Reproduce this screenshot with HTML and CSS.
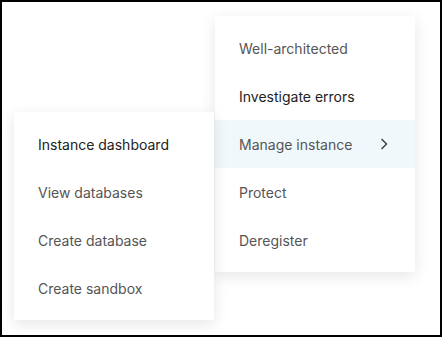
FILE: index.html
```html
<!DOCTYPE html>
<html lang="en">
<head>
    <meta charset="UTF-8">
    <title>Instance menu</title>
    <link rel="stylesheet" href="styles.css">
</head>
<body>
    <div class="frame">
        <!-- Submenu -->
        <ul class="menu submenu">
            <li class="menu-item strong">Instance dashboard</li>
            <li class="menu-item">View databases</li>
            <li class="menu-item">Create database</li>
            <li class="menu-item">Create sandbox</li>
        </ul>

        <!-- Main menu -->
        <ul class="menu main-menu">
            <li class="menu-item">Well-architected</li>
            <li class="menu-item strong">Investigate errors</li>
            <li class="menu-item active">
                <span>Manage instance</span>
                <svg class="chevron" width="8" height="12" viewBox="0 0 8 12">
                    <path d="M1.5 1 L6.5 6 L1.5 11" fill="none" stroke="#333" stroke-width="1.3"/>
                </svg>
            </li>
            <li class="menu-item">Protect</li>
            <li class="menu-item">Deregister</li>
        </ul>
    </div>
</body>
</html>
```

FILE: styles.css
```css
/* General */
body {
    margin: 0;
    font-family: 'Inter', 'Liberation Sans', sans-serif;
    background: #fff;
}

.frame {
    width: 442px;
    height: 337px;
    box-sizing: border-box;
    border: 2px solid #000;
    padding: 14px 0 0 12px;
    display: flex;
    align-items: flex-start;
    gap: 1px;
    overflow: hidden;
}

/* Menus */
.menu {
    list-style: none;
    margin: 0;
    padding: 8px 0;
    width: 200px;
    background: #fff;
    box-shadow: 0 4px 14px rgba(0, 0, 0, 0.1);
}

.submenu {
    margin-top: 96px;
    position: relative;
    z-index: 2;
}

.main-menu {
    position: relative;
    z-index: 1;
}

.menu-item {
    height: 48px;
    padding: 0 24px;
    display: flex;
    align-items: center;
    justify-content: space-between;
    font-size: 14px;
    color: #555;
}

.menu-item.strong {
    color: #222;
}

.menu-item.active {
    background: #f0f8fc;
    padding-right: 27px;
}

.chevron {
    display: block;
}
```
